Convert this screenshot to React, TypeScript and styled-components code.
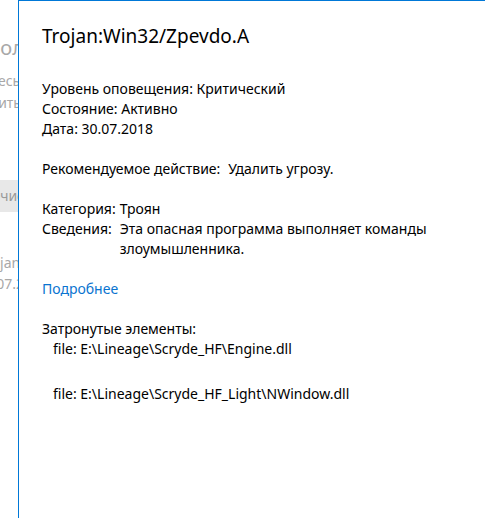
import styled, { createGlobalStyle } from 'styled-components';

const GlobalStyle = createGlobalStyle`
  html, body {
    margin: 0;
    padding: 0;
    background: #ffffff;
  }
  body {
    font-family: "Noto Sans", "Open Sans", sans-serif;
    color: #000;
  }
`;

// the page behind the flyout, only a sliver of it is visible
const backdropLines = [
  { text: 'Журнал контрол', size: 20, height: 44, top: 26 },
  { text: 'угрозы здесь,', size: 14, height: 22, top: 0 },
  { text: 'для защиты', size: 14, height: 22, top: 0 },
];

const Page = styled.div`
  position: relative;
  width: 485px;
  height: 518px;
  overflow: hidden;
`;

const Backdrop = styled.div`
  width: 24px;
  overflow: hidden;
  display: flex;
  flex-direction: column;
  color: #a8a8a8;
`;

const BackLine = styled.div<{ $size: number; $height: number; $top: number }>`
  display: flex;
  justify-content: flex-end;
  white-space: nowrap;
  font-size: ${({ $size }) => $size}px;
  height: ${({ $height }) => $height}px;
  line-height: ${({ $height }) => $height}px;
  margin-top: ${({ $top }) => $top}px;
`;

const BackButton = styled.div`
  display: flex;
  justify-content: flex-end;
  white-space: nowrap;
  margin-top: 66px;
  height: 32px;
  line-height: 32px;
  font-size: 14px;
  background: #e8e8e8;
  color: #9a9a9a;
`;

const Flyout = styled.section`
  position: absolute;
  top: 0;
  left: 18px;
  right: -2px;
  bottom: -2px;
  background: #fff;
  border-top: 1px solid #0078d7;
  border-left: 1px solid #0078d7;
  padding: 20px 24px 0 23px;
  font-size: 14px;
  line-height: 20px;
`;

const Title = styled.h1`
  margin: 0 0 28px;
  font-size: 19px;
  font-weight: 400;
  line-height: 30px;
`;

const Block = styled.div`
  margin-bottom: 20px;
`;

const Line = styled.div``;

const Pairs = styled.div<{ $gap: number }>`
  display: grid;
  grid-template-columns: auto 1fr;
  column-gap: ${({ $gap }) => $gap}px;
  margin-bottom: 20px;
`;

const Link = styled.a`
  display: block;
  color: #0a74d0;
  text-decoration: none;
  margin-bottom: 20px;
`;

const FileLine = styled.div`
  padding-left: 11px;
  margin-bottom: 25px;
`;

const files = [
  'file: E:\\Lineage\\Scryde_HF\\Engine.dll',
  'file: E:\\Lineage\\Scryde_HF_Light\\NWindow.dll',
];

export default function App() {
  return (
    <>
      <GlobalStyle />
      <Page>
        <Backdrop>
          {backdropLines.map((l) => (
            <BackLine key={l.text} $size={l.size} $height={l.height} $top={l.top}>
              {l.text}
            </BackLine>
          ))}
          <BackButton>Журнал очис</BackButton>
          <BackLine $size={14} $height={22} $top={40}>Trojan:</BackLine>
          <BackLine $size={14} $height={20} $top={0}>30.07.2</BackLine>
        </Backdrop>
        <Flyout>
          <Title>Trojan:Win32/Zpevdo.A</Title>
          <Block>
            <Line>Уровень оповещения: Критический</Line>
            <Line>Состояние: Активно</Line>
            <Line>Дата: 30.07.2018</Line>
          </Block>
          <Pairs $gap={8}>
            <span>Рекомендуемое действие:</span>
            <span>Удалить угрозу.</span>
          </Pairs>
          <Pairs $gap={4}>
            <span>Категория:</span>
            <span>Троян</span>
            <span>Сведения:</span>
            <span>Эта опасная программа выполняет команды злоумышленника.</span>
          </Pairs>
          <Link href="#">Подробнее</Link>
          <Line>Затронутые элементы:</Line>
          {files.map((f) => (
            <FileLine key={f}>{f}</FileLine>
          ))}
        </Flyout>
      </Page>
    </>
  );
}
